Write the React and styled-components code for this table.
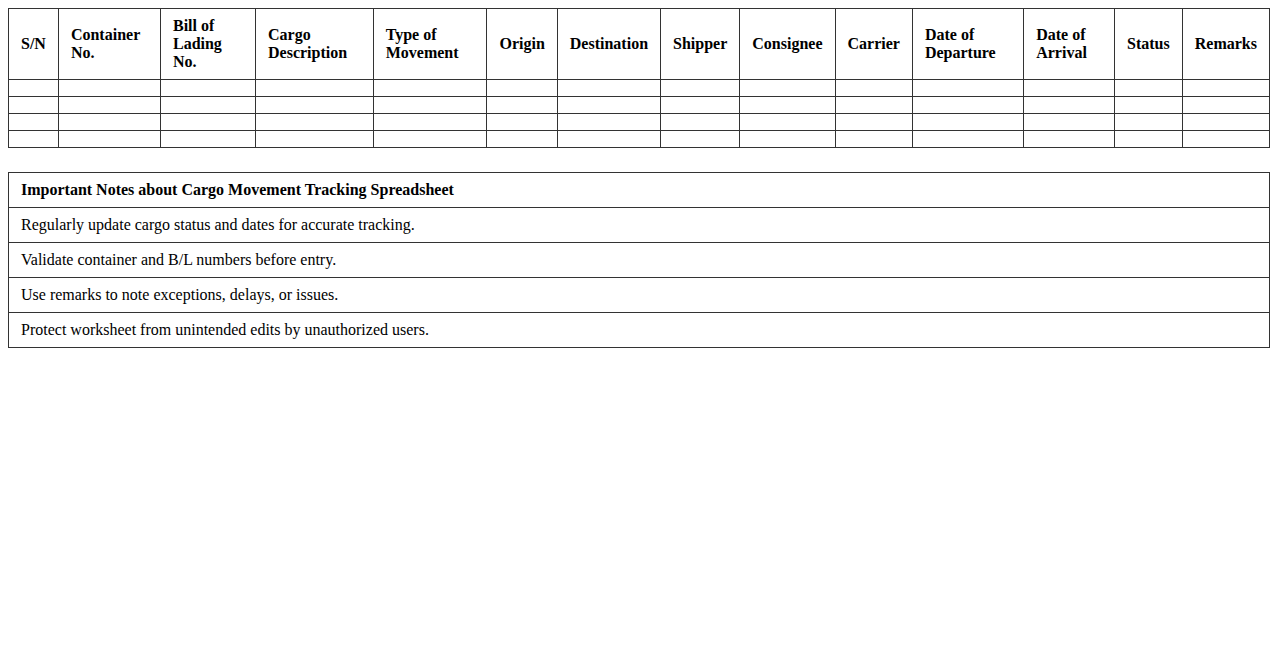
import styled, { createGlobalStyle } from 'styled-components';

const GlobalStyle = createGlobalStyle`
  body {
    margin: 8px;
    background: #fff;
    font-family: "Liberation Serif", "Times New Roman", serif;
    font-size: 16px;
    color: #000;
  }
`;

const Sheet = styled.table`
  width: 100%;
  border-collapse: collapse;
  margin-bottom: ${(props) => (props.spaced ? '24px' : '0')};
`;

const HeadCell = styled.th`
  border: 1px solid #333;
  padding: 8px 12px;
  text-align: left;
  font-weight: bold;
  line-height: normal;
`;

const Cell = styled.td`
  border: 1px solid #333;
  padding: 8px 12px;
  height: 0;
`;

const NoteTitle = styled.td`
  border: 1px solid #333;
  padding: 8px 12px;
  font-weight: bold;
`;

const columns = [
  'S/N',
  'Container No.',
  'Bill of Lading No.',
  'Cargo Description',
  'Type of Movement',
  'Origin',
  'Destination',
  'Shipper',
  'Consignee',
  'Carrier',
  'Date of Departure',
  'Date of Arrival',
  'Status',
  'Remarks',
];

const notes = [
  'Regularly update cargo status and dates for accurate tracking.',
  'Validate container and B/L numbers before entry.',
  'Use remarks to note exceptions, delays, or issues.',
  'Protect worksheet from unintended edits by unauthorized users.',
];

const App = () => (
  <>
    <GlobalStyle />
    <Sheet spaced>
      <thead>
        <tr>
          {columns.map((col) => (
            <HeadCell key={col}>{col}</HeadCell>
          ))}
        </tr>
      </thead>
      <tbody>
        {[0, 1, 2, 3].map((row) => (
          <tr key={row}>
            {columns.map((col) => (
              <Cell key={col} />
            ))}
          </tr>
        ))}
      </tbody>
    </Sheet>
    <Sheet>
      <tbody>
        <tr>
          <NoteTitle>Important Notes about Cargo Movement Tracking Spreadsheet</NoteTitle>
        </tr>
        {notes.map((note) => (
          <tr key={note}>
            <Cell>{note}</Cell>
          </tr>
        ))}
      </tbody>
    </Sheet>
  </>
);

export default App;
